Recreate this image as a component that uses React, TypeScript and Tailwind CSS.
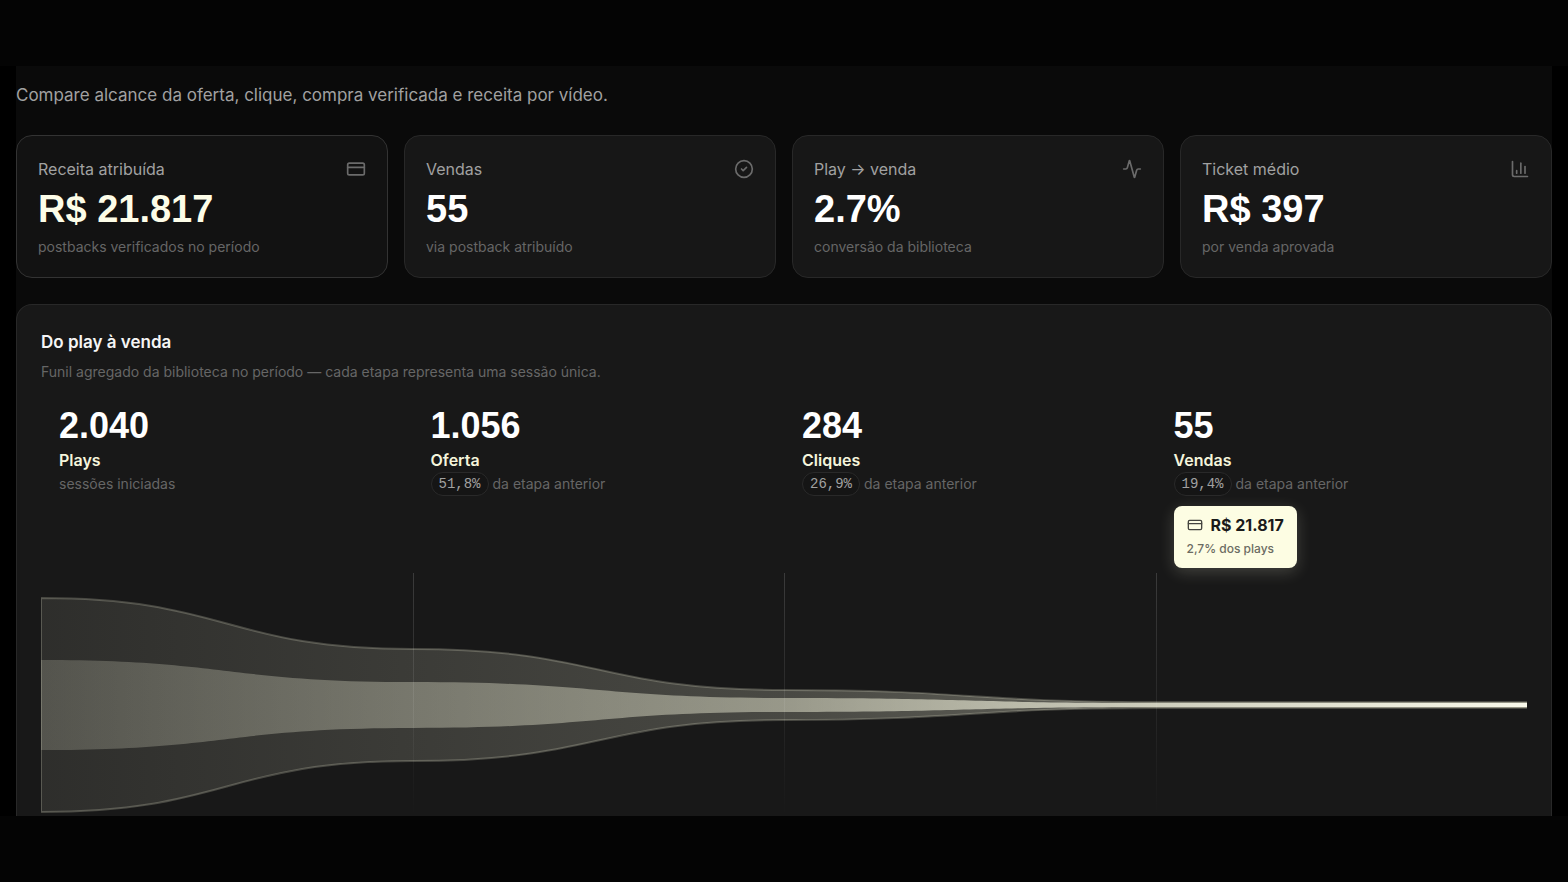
import { Activity, ChartColumn, CircleCheck, CreditCard, type LucideIcon } from 'lucide-react'

interface Kpi {
  label: string
  value: string
  caption: string
  icon: LucideIcon
  highlighted?: boolean
}

interface Stage {
  value: string
  label: string
  rate?: string
  caption: string
}

const kpis: Kpi[] = [
  { label: 'Receita atribuída', value: 'R$ 21.817', caption: 'postbacks verificados no período', icon: CreditCard, highlighted: true },
  { label: 'Vendas', value: '55', caption: 'via postback atribuído', icon: CircleCheck },
  { label: 'Play → venda', value: '2.7%', caption: 'conversão da biblioteca', icon: Activity },
  { label: 'Ticket médio', value: 'R$ 397', caption: 'por venda aprovada', icon: ChartColumn }
]

const stages: Stage[] = [
  { value: '2.040', label: 'Plays', caption: 'sessões iniciadas' },
  { value: '1.056', label: 'Oferta', rate: '51,8%', caption: 'da etapa anterior' },
  { value: '284', label: 'Cliques', rate: '26,9%', caption: 'da etapa anterior' },
  { value: '55', label: 'Vendas', rate: '19,4%', caption: 'da etapa anterior' }
]

const CHART_WIDTH = 1486
const CHART_HEIGHT = 243
const CENTER = 132

// Mirrored smooth shape going through one half-height per stage
function funnelPath(halves: number[]) {
  const step = CHART_WIDTH / halves.length
  const points = [...halves, halves[halves.length - 1]]
  let d = `M0 ${CENTER - points[0]}`
  for (let i = 1; i < points.length; i++) {
    const mid = (i - 0.5) * step
    d += ` C${mid} ${CENTER - points[i - 1]} ${mid} ${CENTER - points[i]} ${i * step} ${CENTER - points[i]}`
  }
  d += ` L${CHART_WIDTH} ${CENTER + points[points.length - 1]}`
  for (let i = points.length - 1; i > 0; i--) {
    const mid = (i - 0.5) * step
    d += ` C${mid} ${CENTER + points[i]} ${mid} ${CENTER + points[i - 1]} ${(i - 1) * step} ${CENTER + points[i - 1]}`
  }
  return `${d} Z`
}

function KpiCard({ label, value, caption, icon: Icon, highlighted }: Kpi) {
  return (
    <div
      className={`rounded-2xl border px-[21px] pt-[21px] pb-[18px] ${
        highlighted ? 'border-[#333333] bg-[#121212]' : 'border-[#282828] bg-[#171717]'
      }`}
    >
      <div className="flex items-center justify-between">
        <p className="text-base leading-6 text-[#a1a1a1]">{label}</p>
        <Icon className="size-5 text-[#6b6b6b]" strokeWidth={2} />
      </div>
      <p
        className={`mt-2 font-['Liberation_Sans',sans-serif] text-[38px] leading-10 font-bold ${
          highlighted ? 'text-[#fdfde8]' : 'text-white'
        }`}
      >
        {value}
      </p>
      <p className="mt-1.5 text-sm leading-6 text-[#666666]">{caption}</p>
    </div>
  )
}

function FunnelChart() {
  return (
    <svg
      className="block h-[243px] w-full"
      viewBox={`0 0 ${CHART_WIDTH} ${CHART_HEIGHT}`}
      preserveAspectRatio="none"
      role="img"
      aria-label="Funil do play à venda"
    >
      <defs>
        <linearGradient id="outer" x1="0" x2="1" y1="0" y2="0">
          <stop offset="0" stopColor="#f5f5dc" stopOpacity="0.1" />
          <stop offset="0.5" stopColor="#f5f5dc" stopOpacity="0.22" />
          <stop offset="1" stopColor="#f5f5dc" stopOpacity="0.45" />
        </linearGradient>
        <linearGradient id="inner" x1="0" x2="1" y1="0" y2="0">
          <stop offset="0" stopColor="#f5f5dc" stopOpacity="0.19" />
          <stop offset="0.5" stopColor="#f5f5dc" stopOpacity="0.46" />
          <stop offset="1" stopColor="#fffff0" stopOpacity="0.95" />
        </linearGradient>
        <linearGradient id="divider" x1="0" x2="0" y1="0" y2="1">
          <stop offset="0" stopColor="#ffffff" stopOpacity="0.15" />
          <stop offset="1" stopColor="#ffffff" stopOpacity="0" />
        </linearGradient>
      </defs>
      <path d={funnelPath([107, 56, 15, 3])} fill="url(#outer)" stroke="#f5f5dc" strokeOpacity="0.22" strokeWidth="2" />
      <path d={funnelPath([45, 23, 7, 2])} fill="url(#inner)" />
      {[1, 2, 3].map(i => (
        <rect key={i} x={Math.round((CHART_WIDTH / 4) * i)} y="0" width="1" height={CHART_HEIGHT} fill="url(#divider)" />
      ))}
    </svg>
  )
}

export default function App() {
  return (
    <div className="min-h-screen bg-[#040404] py-[66px] font-['Inter','Liberation_Sans',sans-serif]">
      <div className="bg-black px-4">
        <main className="bg-[#0a0a0a] pt-[17px]">
          <p className="text-[17px] leading-6 text-[#a1a1a1]">
            Compare alcance da oferta, clique, compra verificada e receita por vídeo.
          </p>

          <section className="mt-7 grid grid-cols-4 gap-4">
            {kpis.map(kpi => (
              <KpiCard key={kpi.label} {...kpi} />
            ))}
          </section>

          <section className="mt-[26px] rounded-t-2xl border border-b-0 border-[#282828] bg-[#181818] px-6 pt-[25px]">
            <h2 className="text-[17px] leading-6 font-semibold text-[#f5f5f5]">Do play à venda</h2>
            <p className="mt-1 text-sm leading-7 text-[#666666]">
              Funil agregado da biblioteca no período — cada etapa representa uma sessão única.
            </p>

            <div className="mt-5 grid grid-cols-4">
              {stages.map(stage => (
                <div key={stage.label} className="px-[18px]">
                  <p className="font-['Liberation_Sans',sans-serif] text-4xl leading-10 font-bold text-white">
                    {stage.value}
                  </p>
                  <p className="mt-0.5 text-base leading-6 font-semibold text-[#f5f5dc]">{stage.label}</p>
                  <p className="flex h-6 items-center gap-1 text-sm text-[#666666]">
                    {stage.rate && (
                      <span className="rounded-full border border-[#292929] bg-[#151515] px-[7px] font-['Liberation_Mono',monospace] text-sm leading-[22px] text-[#a1a1a1]">
                        {stage.rate}
                      </span>
                    )}
                    {stage.caption}
                  </p>
                  {stage.label === 'Vendas' && (
                    <div className="mt-2.5 mb-[5px] w-fit rounded-lg bg-[#fdfde3] px-[13px] py-[7px] shadow-[0_4px_16px_rgba(245,245,220,0.2)]">
                      <p className="flex items-center gap-2 text-base leading-6 font-bold text-[#1a1a1a]">
                        <CreditCard className="size-4 text-[#44443f]" strokeWidth={2} />
                        R$ 21.817
                      </p>
                      <p className="text-xs leading-6 font-medium text-[#6b6b62]">2,7% dos plays</p>
                    </div>
                  )}
                </div>
              ))}
            </div>

            <FunnelChart />
          </section>
        </main>
      </div>
    </div>
  )
}
